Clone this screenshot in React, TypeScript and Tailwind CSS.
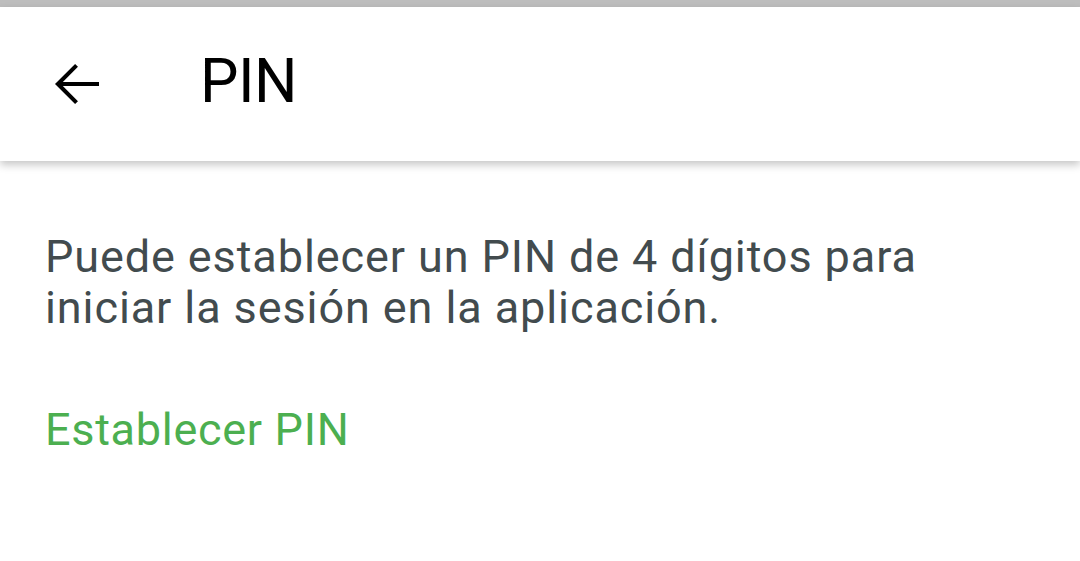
import React from "react";

const BackArrow = () => (
  <svg viewBox="0 0 24 24" className="h-[66px] w-[66px]" fill="#000">
    <path d="M20 11.25H6.85l5.5-5.5-1.05-1.05L4 12l7.3 7.3 1.05-1.05-5.5-5.5H20z" />
  </svg>
);

const App = () => {
  return (
    <div className="flex h-[561px] w-[1080px] flex-col bg-white font-['Roboto',sans-serif]">
      <div className="h-[7px] bg-[#bdbdbd]" />
      <header className="relative z-10 flex h-[154px] items-center bg-white shadow-[0_4px_8px_rgba(0,0,0,0.22)]">
        <button className="ml-[44px] flex items-center">
          <BackArrow />
        </button>
        <h1 className="mb-[6px] ml-[90px] text-[61px] leading-none tracking-[-0.5px] text-black">
          PIN
        </h1>
      </header>
      <main className="flex flex-col px-[45px] pt-[70px]">
        <p className="text-[45px] leading-[51px] tracking-[0.9px] text-[#424b4e]">
          Puede establecer un PIN de 4 dígitos para
          <br />
          iniciar la sesión en la aplicación.
        </p>
        <button className="mt-[71px] self-start text-[45px] leading-[51px] tracking-[0.7px] text-[#4caf50]">
          Establecer PIN
        </button>
      </main>
    </div>
  );
};

export default App;
